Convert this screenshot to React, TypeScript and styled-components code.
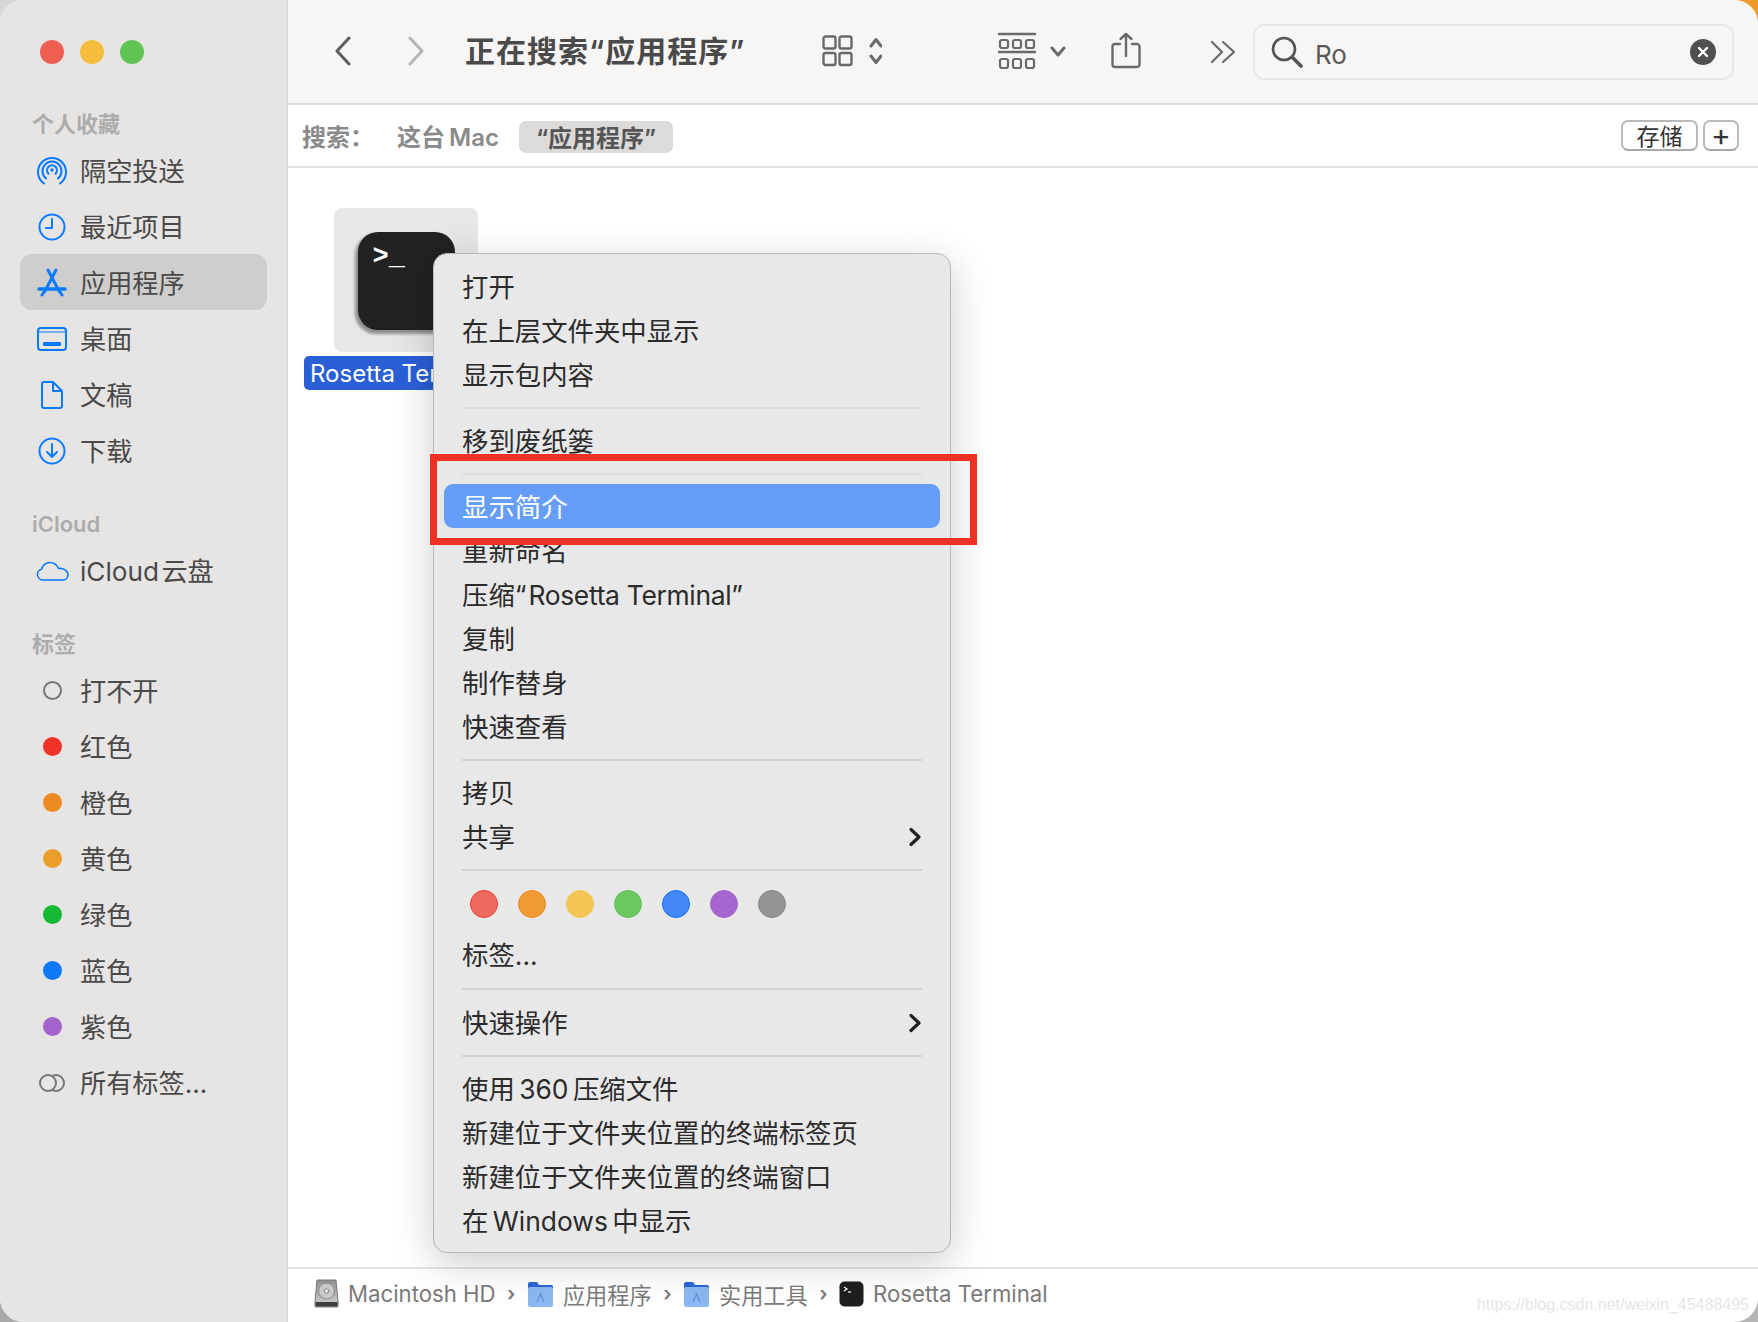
import React from 'react';
import styled, { createGlobalStyle } from 'styled-components';

const FONT = `Inter, "Noto Sans CJK SC", "Liberation Sans", sans-serif`;

const GlobalStyle = createGlobalStyle`
  html, body {
    margin: 0;
    padding: 0;
    background: #fff;
  }
  * {
    box-sizing: border-box;
  }
`;

const Desktop = styled.div`
  width: 1758px;
  height: 1322px;
  background: conic-gradient(#ee9a2c 0 25%, #b5b5b5 25% 50%, #a8a8a8 50% 75%, #d8d8d8 75%);
  overflow: hidden;
  font-family: ${FONT};
`;

const Window = styled.div`
  position: relative;
  display: flex;
  width: 100%;
  height: 100%;
  border-radius: 24px;
  overflow: hidden;
  background: #fff;
`;

const Sidebar = styled.aside`
  flex: 0 0 288px;
  display: flex;
  flex-direction: column;
  padding: 40px 20px 0;
  background: #e6e5e4;
  border-right: 1px solid #d8d8d8;
`;

const Lights = styled.div`
  display: flex;
  gap: 16px;
  padding-left: 20px;
  height: 24px;
  margin-bottom: 47px;
`;

const Light = styled.span<{ $color: string }>`
  width: 24px;
  height: 24px;
  border-radius: 50%;
  background: ${({ $color }) => $color};
`;

const SectionTitle = styled.div<{ $gap?: number }>`
  height: 31px;
  line-height: 26px;
  padding-left: 12px;
  margin-top: ${({ $gap }) => $gap ?? 0}px;
  font-size: 22px;
  font-weight: 600;
  color: #acacac;
`;

const SideRow = styled.div<{ $active?: boolean }>`
  display: flex;
  align-items: center;
  height: 56px;
  padding: 0 0 1px 12px;
  border-radius: 12px;
  background: ${({ $active }) => ($active ? '#cfcecd' : 'transparent')};
  font-size: 26.2px;
  word-spacing: -5px;
  color: #4a4a4a;
`;

const SideIcon = styled.span`
  flex: 0 0 40px;
  display: flex;
  align-items: center;
  justify-content: center;
  margin: 2px 8px 0 0;
`;

const TagDot = styled.span<{ $color?: string }>`
  width: 19px;
  height: 19px;
  border-radius: 50%;
  background: ${({ $color }) => $color ?? 'transparent'};
  border: ${({ $color }) => ($color ? 'none' : '2px solid #767676')};
`;

const Main = styled.main`
  flex: 1;
  display: flex;
  flex-direction: column;
  min-width: 0;
`;

const Toolbar = styled.header`
  flex: 0 0 105px;
  display: flex;
  align-items: center;
  padding: 0 24px 2px 46px;
  background: #f7f6f5;
  border-bottom: 2px solid #dedede;
`;

const NavButton = styled.span<{ $width: number }>`
  flex: 0 0 ${({ $width }) => $width}px;
  display: flex;
  align-items: center;
`;

const WindowTitle = styled.h1`
  flex: 0 0 350px;
  margin: 0;
  padding-bottom: 4px;
  font-size: 30px;
  font-weight: 600;
  letter-spacing: 1px;
  color: #4a4a4a;
  white-space: nowrap;
`;

const ToolIcon = styled.span<{ $ml: number; $mt?: number }>`
  display: flex;
  align-items: center;
  margin-left: ${({ $ml }) => $ml}px;
  margin-top: ${({ $mt }) => $mt ?? 0}px;
`;

const SearchBox = styled.div`
  flex: 1;
  display: flex;
  align-items: center;
  height: 56px;
  margin: 2px 0 0 17px;
  padding: 0 16px 0 16px;
  border: 2px solid #e8e8e8;
  border-radius: 11px;
`;

const SearchText = styled.span`
  flex: 1;
  margin-left: 12px;
  padding-top: 6px;
  font-size: 26px;
  color: #595959;
`;

const ClearButton = styled.span`
  display: flex;
  align-items: center;
  justify-content: center;
  width: 26px;
  height: 26px;
  border-radius: 50%;
  background: #505050;
`;

const ScopeBar = styled.div`
  flex: 0 0 63px;
  display: flex;
  align-items: center;
  padding: 0 19px 0 14px;
  border-bottom: 2px solid #e2e2e2;
  font-size: 24px;
  font-weight: 600;
  word-spacing: -2px;
  color: #8a8a8a;
`;

const ScopeLabel = styled.span`
  flex: 0 0 95px;
`;

const ScopePill = styled.span`
  display: flex;
  align-items: center;
  height: 32px;
  margin: 3px 0 0 20px;
  padding: 0 17px 2px;
  border-radius: 7px;
  background: #dcdbda;
  color: #555;
`;

const ScopeActions = styled.div`
  display: flex;
  gap: 5px;
  margin-left: auto;
`;

const ScopeButton = styled.span<{ $width: number; $size?: number }>`
  display: flex;
  align-items: center;
  justify-content: center;
  width: ${({ $width }) => $width}px;
  height: 31px;
  padding-bottom: 2px;
  border: 2px solid #b9b9b9;
  border-bottom-color: #a9a9a9;
  border-radius: 7px;
  background: #fff;
  font-size: ${({ $size }) => $size ?? 23}px;
  font-weight: 400;
  color: #333;
`;

const Content = styled.section`
  position: relative;
  flex: 1;
  padding: 40px 0 0 46px;
`;

const FileTile = styled.div`
  display: flex;
  align-items: center;
  justify-content: center;
  width: 144px;
  height: 144px;
  padding-top: 2px;
  border-radius: 8px;
  background: #e8e7e6;
`;

const TerminalIcon = styled.div`
  width: 97px;
  height: 98px;
  padding: 9px 0 0 15px;
  border-radius: 20px;
  background: #222;
  box-shadow: -2px 3px 3px 1px #8e8e8e;
  color: #fff;
  font-family: "Liberation Mono", monospace;
  font-size: 27px;
  font-weight: 700;
  line-height: 32px;
`;

const FileLabel = styled.div`
  width: max-content;
  height: 34px;
  margin: 4px 0 0 -30px;
  padding: 0 7px 0 6px;
  border-radius: 5px;
  background: #2a5fd6;
  color: #fff;
  font-size: 24px;
  line-height: 36px;
  white-space: nowrap;
`;

const Menu = styled.div`
  position: absolute;
  left: 145px;
  top: 85px;
  width: 518px;
  height: 1000px;
  padding: 10px 10px 0;
  border: 1px solid #b8b8b8;
  border-radius: 14px;
  background: #e8e8e8;
  box-shadow: 0 10px 40px rgba(0, 0, 0, 0.2);
  font-size: 26.4px;
  word-spacing: -3px;
  color: #2b2b2b;
`;

const MenuRow = styled.div<{ $active?: boolean }>`
  display: flex;
  align-items: center;
  justify-content: space-between;
  height: 44px;
  padding: 0 18px 2px 18px;
  border-radius: 9px;
  background: ${({ $active }) => ($active ? '#669ef7' : 'transparent')};
  color: ${({ $active }) => ($active ? '#fff' : 'inherit')};
  white-space: nowrap;

  svg {
    margin-top: 3px;
  }
`;

const AppName = styled.span`
  margin-left: 2px;
  word-spacing: normal;
  letter-spacing: -0.3px;
`;

const MenuSep = styled.div<{ $height?: number; $faint?: boolean }>`
  display: flex;
  align-items: center;
  height: ${({ $height }) => $height ?? 22}px;
  padding: 2px 18px 0;

  &::after {
    content: '';
    flex: 1;
    height: 2px;
    background: ${({ $faint }) => ($faint ? '#dedede' : '#d3d3d3')};
  }
`;

const ColorDots = styled.div`
  display: flex;
  gap: 20px;
  height: 52px;
  padding: 10px 0 0 26px;
`;

const ColorDot = styled.span<{ $color: string; $ring: string }>`
  width: 28px;
  height: 28px;
  border-radius: 50%;
  background: ${({ $color }) => $color};
  border: 1px solid ${({ $ring }) => $ring};
`;

const HighlightFrame = styled.div`
  position: absolute;
  left: 142px;
  top: 286px;
  width: 547px;
  height: 91px;
  border: 7px solid #ee3124;
`;

const PathBar = styled.footer`
  flex: 0 0 55px;
  display: flex;
  align-items: center;
  padding: 0 0 4px 26px;
  border-top: 2px solid #e4e4e4;
  font-size: 22.2px;
  color: #7a7a7a;
  white-space: nowrap;
`;

const Crumb = styled.span`
  display: flex;
  align-items: center;
  gap: 9px;
`;

const CrumbArrow = styled.span`
  margin: 0 11.500px;
  font-size: 20px;
  font-weight: 600;
`;

const Watermark = styled.span`
  position: absolute;
  right: 9px;
  bottom: 8px;
  font-family: "Liberation Sans", sans-serif;
  font-size: 16px;
  color: #e6e6e6;
`;

const BLUE = '#0a7aff';

const AirdropIcon = () => (
  <svg width="30" height="30" viewBox="0 0 30 30" fill="none" stroke={BLUE} strokeWidth="2" strokeLinecap="round">
    <path d="M7 27.500A14 14 0 1 1 23 27.500" />
    <path d="M9.200 22.500A9.500 9.500 0 1 1 20.800 22.500" />
    <path d="M11.500 17.800A5 5 0 1 1 18.500 17.800" />
    <circle cx="15" cy="14" r="1.700" fill={BLUE} stroke="none" />
  </svg>
);

const ClockIcon = () => (
  <svg width="28" height="28" viewBox="0 0 28 28" fill="none" stroke={BLUE} strokeWidth="2" strokeLinecap="round">
    <circle cx="14" cy="14" r="12.500" />
    <path d="M14 6v9H8" />
  </svg>
);

const AppsIcon = () => (
  <svg width="30" height="30" viewBox="0 0 30 30" fill="none" stroke={BLUE} strokeWidth="3" strokeLinecap="round">
    <path d="M11 2l11 21" />
    <path d="M19 2L8 23" />
    <path d="M2 21h26" strokeWidth="3.500" />
    <path d="M5 27l2-3M25 27l-2-3" />
  </svg>
);

const DesktopIcon = () => (
  <svg width="30" height="24" viewBox="0 0 30 24" fill="none" stroke={BLUE} strokeWidth="2">
    <rect x="1" y="1" width="28" height="22" rx="3" />
    <path d="M1 5h28" strokeWidth="1" />
    <rect x="6" y="15" width="18" height="4" fill={BLUE} stroke="none" rx="1" />
  </svg>
);

const DocIcon = () => (
  <svg width="22" height="28" viewBox="0 0 22 28" fill="none" stroke={BLUE} strokeWidth="2" strokeLinejoin="round">
    <path d="M3 1h9l9 9v15a2 2 0 0 1-2 2H3a2 2 0 0 1-2-2V3a2 2 0 0 1 2-2z" />
    <path d="M12 1v9h9" />
  </svg>
);

const DownloadIcon = () => (
  <svg width="28" height="28" viewBox="0 0 28 28" fill="none" stroke={BLUE} strokeWidth="2" strokeLinecap="round" strokeLinejoin="round">
    <circle cx="14" cy="14" r="12.500" />
    <path d="M14 7v13M9 15l5 5 5-5" />
  </svg>
);

const CloudIcon = () => (
  <svg width="33" height="20" viewBox="0 0 33 20" fill="none" stroke={BLUE} strokeWidth="1.600" strokeLinejoin="round">
    <path d="M7 19a5.500 5.500 0 0 1-1.500-10.800C7 4 10 1.500 14 1.500c4 0 7 2.500 8.500 6 5-.8 9.500 2.500 9.500 6.500 0 3-2.500 5-5.500 5z" />
  </svg>
);

const AllTagsIcon = () => (
  <svg width="28" height="18" viewBox="0 0 28 18" fill="none" stroke="#767676" strokeWidth="2">
    <circle cx="18" cy="9" r="8" />
    <circle cx="10" cy="9" r="8" fill="#e6e5e4" />
  </svg>
);

const Chevron = ({ dir, color }: { dir: 'left' | 'right'; color: string }) => (
  <svg width="18" height="30" viewBox="0 0 18 30" fill="none" stroke={color} strokeWidth="3" strokeLinecap="round" strokeLinejoin="round">
    <path d={dir === 'left' ? 'M15 2L3 15l12 13' : 'M3 2l12 13L3 28'} />
  </svg>
);

const GridIcon = () => (
  <svg width="60" height="32" viewBox="0 0 60 32" fill="none" stroke="#6a6a6a" strokeWidth="2.400" strokeLinecap="round" strokeLinejoin="round">
    <rect x="1.500" y="1.500" width="12" height="12" rx="2" />
    <rect x="17.500" y="1.500" width="12" height="12" rx="2" />
    <rect x="1.500" y="18" width="12" height="12" rx="2" />
    <rect x="17.500" y="18" width="12" height="12" rx="2" />
    <path d="M49 11l5-6.500 5 6.500" strokeWidth="3" />
    <path d="M49 21l5 6.500 5-6.500" strokeWidth="3" />
  </svg>
);

const GroupIcon = () => (
  <svg width="68" height="38" viewBox="0 0 68 38" fill="none" stroke="#6a6a6a" strokeWidth="2.200" strokeLinecap="round" strokeLinejoin="round">
    <path d="M1 2h36M1 20h36" strokeWidth="2.600" />
    <rect x="2" y="8" width="8" height="8" rx="2" />
    <rect x="15" y="8" width="8" height="8" rx="2" />
    <rect x="28" y="8" width="8" height="8" rx="2" />
    <rect x="2" y="27" width="8" height="9" rx="2" />
    <rect x="15" y="27" width="8" height="9" rx="2" />
    <rect x="28" y="27" width="8" height="9" rx="2" />
    <path d="M54 16l6 7 6-7" strokeWidth="3" />
  </svg>
);

const ShareIcon = () => (
  <svg width="30" height="37" viewBox="0 0 30 37" fill="none" stroke="#6a6a6a" strokeWidth="2.400" strokeLinecap="round" strokeLinejoin="round">
    <path d="M9 12H4a2.500 2.500 0 0 0-2.500 2.500v18A2.500 2.500 0 0 0 4 35h22a2.500 2.500 0 0 0 2.500-2.500v-18A2.500 2.500 0 0 0 26 12h-5" />
    <path d="M15 24V2M9.500 7L15 2l5.500 5" />
  </svg>
);

const MoreIcon = () => (
  <svg width="26" height="24" viewBox="0 0 26 24" fill="none" stroke="#6a6a6a" strokeWidth="2.200" strokeLinecap="round" strokeLinejoin="round">
    <path d="M2 2l10 10L2 22M13 2l11 10-11 10" />
  </svg>
);

const SearchIcon = () => (
  <svg width="32" height="32" viewBox="0 0 32 32" fill="none" stroke="#555" strokeWidth="2.600" strokeLinecap="round">
    <circle cx="13" cy="13" r="11" />
    <path d="M21 21l9 9" strokeWidth="3.600" />
  </svg>
);

const SubmenuArrow = () => (
  <svg width="14" height="20" viewBox="0 0 14 20" fill="none" stroke="#222" strokeWidth="3.200" strokeLinecap="round" strokeLinejoin="round">
    <path d="M3 2.500L11 10l-8 7.500" />
  </svg>
);

const DiskIcon = () => (
  <svg width="25" height="29" viewBox="0 0 25 29">
    <defs>
      <linearGradient id="diskBody" x1="0" y1="0" x2="0" y2="1">
        <stop offset="0" stopColor="#8f8f8f" />
        <stop offset="1" stopColor="#d2d2d2" />
      </linearGradient>
    </defs>
    <path d="M3 1h19l2 21v5a1 1 0 0 1-1 1H2a1 1 0 0 1-1-1v-5z" fill="url(#diskBody)" stroke="#777" />
    <ellipse cx="12.500" cy="12" rx="8" ry="8" fill="#c9c9c9" stroke="#8a8a8a" />
    <circle cx="12.500" cy="12" r="2.200" fill="#eee" stroke="#888" />
    <rect x="1.500" y="23" width="22" height="4.500" fill="#3f3f3f" />
  </svg>
);

const FolderIcon = () => (
  <svg width="27" height="26" viewBox="0 0 27 26">
    <path d="M1 3a2 2 0 0 1 2-2h7l2 3h12a2 2 0 0 1 2 2v6H1z" fill="#2a66d4" />
    <rect x="1" y="6" width="25" height="20" rx="2" fill="#8ab8f0" />
    <path d="M10 21l4-9M17 21l-4-9" stroke="#5e93d8" strokeWidth="1.200" />
  </svg>
);

const MiniTerminal = () => (
  <svg width="25" height="26" viewBox="0 0 25 26">
    <rect x="0.500" y="0.500" width="24" height="25" rx="5" fill="#1f1f1f" />
    <path d="M5 6l3 2-3 2" fill="none" stroke="#fff" strokeWidth="1.200" />
    <path d="M9 11h3" stroke="#fff" strokeWidth="1.200" />
  </svg>
);

const favorites = [
  { icon: <AirdropIcon />, label: '隔空投送' },
  { icon: <ClockIcon />, label: '最近项目' },
  { icon: <AppsIcon />, label: '应用程序', active: true },
  { icon: <DesktopIcon />, label: '桌面' },
  { icon: <DocIcon />, label: '文稿' },
  { icon: <DownloadIcon />, label: '下载' },
];

const tags = [
  { color: undefined, label: '打不开' },
  { color: '#f03327', label: '红色' },
  { color: '#ec8a24', label: '橙色' },
  { color: '#ea9f2c', label: '黄色' },
  { color: '#16b934', label: '绿色' },
  { color: '#0f79f5', label: '蓝色' },
  { color: '#a462cd', label: '紫色' },
];

const menuColors = [
  { color: '#ec6a5e', ring: '#ee3a2e' },
  { color: '#ef9b32', ring: '#ec8a24' },
  { color: '#f4c553', ring: '#f4c553' },
  { color: '#6ac761', ring: '#62c157' },
  { color: '#4488f8', ring: '#0f6ff0' },
  { color: '#a566d0', ring: '#a060cc' },
  { color: '#949494', ring: '#848484' },
];

function App() {
  return (
    <Desktop>
      <GlobalStyle />
      <Window>
        <Sidebar>
          <Lights>
            <Light $color="#ee5f52" />
            <Light $color="#f5bd3d" />
            <Light $color="#5fc454" />
          </Lights>
          <SectionTitle>个人收藏</SectionTitle>
          {favorites.map((item) => (
            <SideRow key={item.label} $active={item.active}>
              <SideIcon>{item.icon}</SideIcon>
              {item.label}
            </SideRow>
          ))}
          <SectionTitle $gap={33}>iCloud</SectionTitle>
          <SideRow>
            <SideIcon>
              <CloudIcon />
            </SideIcon>
            iCloud 云盘
          </SideRow>
          <SectionTitle $gap={33}>标签</SectionTitle>
          {tags.map((tag) => (
            <SideRow key={tag.label}>
              <SideIcon>
                <TagDot $color={tag.color} />
              </SideIcon>
              {tag.label}
            </SideRow>
          ))}
          <SideRow>
            <SideIcon>
              <AllTagsIcon />
            </SideIcon>
            所有标签...
          </SideRow>
        </Sidebar>
        <Main>
          <Toolbar>
            <NavButton $width={73}>
              <Chevron dir="left" color="#5c5c5c" />
            </NavButton>
            <NavButton $width={58}>
              <Chevron dir="right" color="#b5b5b5" />
            </NavButton>
            <WindowTitle>正在搜索“应用程序”</WindowTitle>
            <ToolIcon $ml={7}>
              <GridIcon />
            </ToolIcon>
            <ToolIcon $ml={116}>
              <GroupIcon />
            </ToolIcon>
            <ToolIcon $ml={45}>
              <ShareIcon />
            </ToolIcon>
            <ToolIcon $ml={69} $mt={3}>
              <MoreIcon />
            </ToolIcon>
            <SearchBox>
              <SearchIcon />
              <SearchText>Ro</SearchText>
              <ClearButton>
                <svg width="12" height="12" viewBox="0 0 12 12" stroke="#fff" strokeWidth="2.400" strokeLinecap="round">
                  <path d="M2 2l8 8M10 2l-8 8" />
                </svg>
              </ClearButton>
            </SearchBox>
          </Toolbar>
          <ScopeBar>
            <ScopeLabel>搜索：</ScopeLabel>
            <span>这台 Mac</span>
            <ScopePill>“应用程序”</ScopePill>
            <ScopeActions>
              <ScopeButton $width={77}>存储</ScopeButton>
              <ScopeButton $width={36} $size={30}>+</ScopeButton>
            </ScopeActions>
          </ScopeBar>
          <Content>
            <FileTile>
              <TerminalIcon>&gt;_</TerminalIcon>
            </FileTile>
            <FileLabel>Rosetta Terminal</FileLabel>
            <Menu>
              <MenuRow>打开</MenuRow>
              <MenuRow>在上层文件夹中显示</MenuRow>
              <MenuRow>显示包内容</MenuRow>
              <MenuSep $faint />
              <MenuRow>移到废纸篓</MenuRow>
              <MenuSep $faint />
              <MenuRow $active>显示简介</MenuRow>
              <MenuRow>重新命名</MenuRow>
              <MenuRow>
                <span>
                  压缩“<AppName>Rosetta Terminal</AppName>”
                </span>
              </MenuRow>
              <MenuRow>复制</MenuRow>
              <MenuRow>制作替身</MenuRow>
              <MenuRow>快速查看</MenuRow>
              <MenuSep />
              <MenuRow>拷贝</MenuRow>
              <MenuRow>
                共享
                <SubmenuArrow />
              </MenuRow>
              <MenuSep />
              <ColorDots>
                {menuColors.map((dot) => (
                  <ColorDot key={dot.color} $color={dot.color} $ring={dot.ring} />
                ))}
              </ColorDots>
              <MenuRow>标签...</MenuRow>
              <MenuSep $height={24} />
              <MenuRow>
                快速操作
                <SubmenuArrow />
              </MenuRow>
              <MenuSep />
              <MenuRow>使用 360 压缩文件</MenuRow>
              <MenuRow>新建位于文件夹位置的终端标签页</MenuRow>
              <MenuRow>新建位于文件夹位置的终端窗口</MenuRow>
              <MenuRow>在 Windows 中显示</MenuRow>
            </Menu>
            <HighlightFrame />
          </Content>
          <PathBar>
            <Crumb>
              <DiskIcon />
              Macintosh HD
            </Crumb>
            <CrumbArrow>›</CrumbArrow>
            <Crumb>
              <FolderIcon />
              应用程序
            </Crumb>
            <CrumbArrow>›</CrumbArrow>
            <Crumb>
              <FolderIcon />
              实用工具
            </Crumb>
            <CrumbArrow>›</CrumbArrow>
            <Crumb>
              <MiniTerminal />
              Rosetta Terminal
            </Crumb>
          </PathBar>
        </Main>
        <Watermark>https://blog.csdn.net/weixin_45488495</Watermark>
      </Window>
    </Desktop>
  );
}

export default App;
